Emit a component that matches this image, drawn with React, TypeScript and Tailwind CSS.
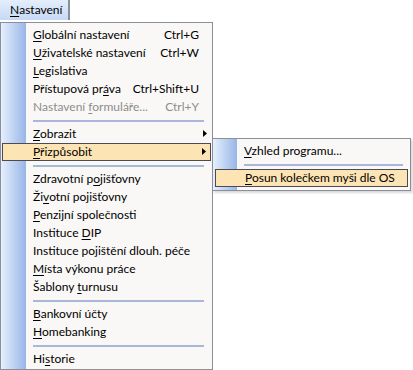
import React from 'react';

type Item =
  | { sep: true }
  | {
      sep?: false;
      pre: string;
      u?: string;
      post?: string;
      shortcut?: string;
      disabled?: boolean;
      arrow?: boolean;
      active?: boolean;
    };

const items: Item[] = [
  { pre: '', u: 'G', post: 'lobální nastavení', shortcut: 'Ctrl+G' },
  { pre: '', u: 'U', post: 'živatelské nastavení', shortcut: 'Ctrl+W' },
  { pre: '', u: 'L', post: 'egislativa' },
  { pre: 'Přístupová pr', u: 'á', post: 'va', shortcut: 'Ctrl+Shift+U' },
  { pre: 'Nastavení ', u: 'f', post: 'ormuláře...', shortcut: 'Ctrl+Y', disabled: true },
  { sep: true },
  { pre: '', u: 'Z', post: 'obrazit', arrow: true },
  { pre: '', u: 'P', post: 'řizpůsobit', arrow: true, active: true },
  { sep: true },
  { pre: 'Zdravotní p', u: 'o', post: 'jišťovny' },
  { pre: 'Ži', u: 'v', post: 'otní pojišťovny' },
  { pre: '', u: 'P', post: 'enzijní společnosti' },
  { pre: 'Instituce ', u: 'D', post: 'IP' },
  { pre: 'Instituce pojištění dlouh. péče' },
  { pre: '', u: 'M', post: 'ísta výkonu práce' },
  { pre: 'Šablony ', u: 't', post: 'urnusu' },
  { sep: true },
  { pre: '', u: 'B', post: 'ankovní účty' },
  { pre: '', u: 'H', post: 'omebanking' },
  { sep: true },
  { pre: 'Hi', u: 's', post: 'torie' },
];

const Label = ({ pre, u, post }: { pre: string; u?: string; post?: string }) => (
  <span className="whitespace-nowrap">
    {pre}
    {u && <span className="underline underline-offset-2">{u}</span>}
    {post}
  </span>
);

const Arrow = () => (
  <svg width="4" height="7" viewBox="0 0 4 7" className="absolute right-[5px] top-[5px]">
    <path d="M0 0 L4 3.5 L0 7 Z" fill="#000" />
  </svg>
);

const Separator = () => (
  <div className="h-[9px] flex items-center pl-[32px] pr-[8px]">
    <div className="h-[2px] w-full bg-[#a9b8d9]" />
  </div>
);

export default function App() {
  return (
    <div
      className="relative w-[413px] h-[370px] bg-white text-[12px] text-black overflow-hidden"
      style={{ fontFamily: 'Lato, "Noto Sans", sans-serif' }}
    >
      {/* menu bar */}
      <div className="h-[20px] w-[70px] bg-gradient-to-b from-[#e4eefc] to-[#c6d9f5] border-r-[2px] border-[#8a8f9c] flex items-center pl-[10px] leading-none">
        <span className="underline underline-offset-2">N</span>astavení
      </div>

      {/* dropdown */}
      <div className="absolute left-0 top-[22px] w-[213px] h-[348px] bg-[#f9f8f6] border border-[#8c8f99] pt-[3px]">
        <div className="absolute left-0 top-0 bottom-0 w-[25px] bg-gradient-to-r from-[#e6f0fd] to-[#98b6e6]" />
        {items.map((it, i) =>
          it.sep ? (
            <Separator key={i} />
          ) : (
            <div
              key={i}
              className={`relative h-[18px] flex items-center pr-[13px] leading-none whitespace-nowrap ${
                it.active
                  ? 'bg-[#fde4b4] outline outline-1 outline-[#4b4b55] -outline-offset-1 mx-[1px] pl-[31px]'
                  : 'pl-[32px]'
              } ${it.disabled ? 'text-[#8d8d8d]' : ''}`}
            >
              <Label pre={it.pre} u={it.u} post={it.post} />
              {it.shortcut && <span className="ml-auto">{it.shortcut}</span>}
              {it.arrow && <Arrow />}
            </div>
          )
        )}
      </div>

      {/* submenu */}
      <div className="absolute left-[212px] top-[138px] w-[199px] bg-[#f9f8f6] border border-[#8c8f99] py-[3px] shadow-[2px_2px_2px_rgba(0,0,0,0.15)]">
        <div className="absolute left-0 top-0 bottom-0 w-[24px] bg-gradient-to-r from-[#e6f0fd] to-[#98b6e6]" />
        <div className="relative h-[18px] flex items-center pl-[31px] leading-none">
          <Label pre="" u="V" post="zhled programu..." />
        </div>
        <div className="h-[9px] flex items-center pl-[31px] pr-[7px]">
          <div className="relative h-[2px] w-full bg-[#a9b8d9]" />
        </div>
        <div className="relative h-[18px] mx-[2px] flex items-center pl-[30px] leading-none bg-[#fde4b4] outline outline-1 outline-[#4b4b55] -outline-offset-1">
          <Label pre="" u="P" post="osun kolečkem myši dle OS" />
        </div>
      </div>
    </div>
  );
}
